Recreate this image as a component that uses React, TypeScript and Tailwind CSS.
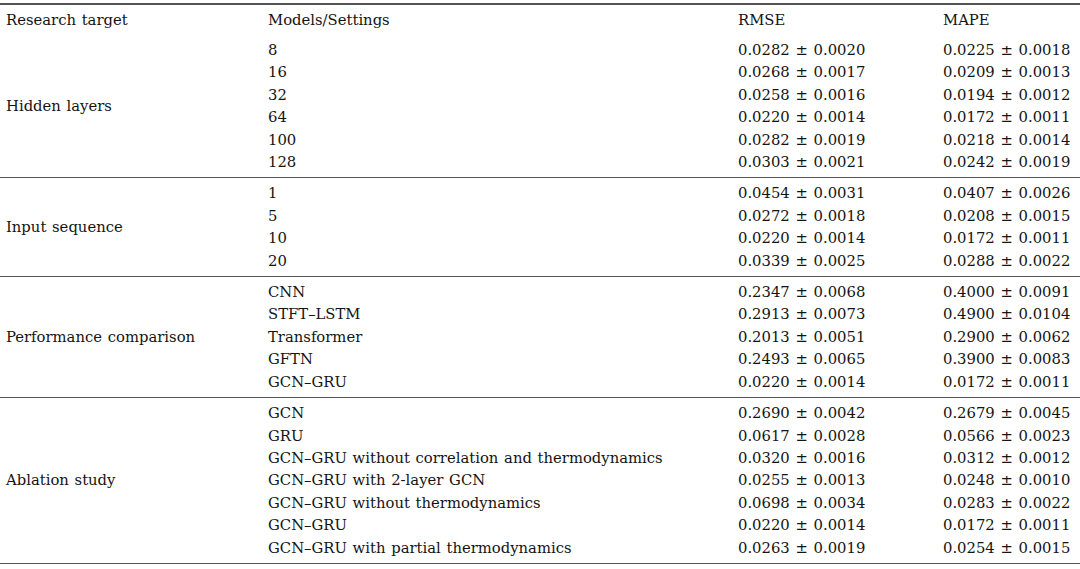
const sections: { target: string; rows: [string, string, string][] }[] = [
  {
    target: "Hidden layers",
    rows: [
      ["8", "0.0282 ± 0.0020", "0.0225 ± 0.0018"],
      ["16", "0.0268 ± 0.0017", "0.0209 ± 0.0013"],
      ["32", "0.0258 ± 0.0016", "0.0194 ± 0.0012"],
      ["64", "0.0220 ± 0.0014", "0.0172 ± 0.0011"],
      ["100", "0.0282 ± 0.0019", "0.0218 ± 0.0014"],
      ["128", "0.0303 ± 0.0021", "0.0242 ± 0.0019"],
    ],
  },
  {
    target: "Input sequence",
    rows: [
      ["1", "0.0454 ± 0.0031", "0.0407 ± 0.0026"],
      ["5", "0.0272 ± 0.0018", "0.0208 ± 0.0015"],
      ["10", "0.0220 ± 0.0014", "0.0172 ± 0.0011"],
      ["20", "0.0339 ± 0.0025", "0.0288 ± 0.0022"],
    ],
  },
  {
    target: "Performance comparison",
    rows: [
      ["CNN", "0.2347 ± 0.0068", "0.4000 ± 0.0091"],
      ["STFT–LSTM", "0.2913 ± 0.0073", "0.4900 ± 0.0104"],
      ["Transformer", "0.2013 ± 0.0051", "0.2900 ± 0.0062"],
      ["GFTN", "0.2493 ± 0.0065", "0.3900 ± 0.0083"],
      ["GCN–GRU", "0.0220 ± 0.0014", "0.0172 ± 0.0011"],
    ],
  },
  {
    target: "Ablation study",
    rows: [
      ["GCN", "0.2690 ± 0.0042", "0.2679 ± 0.0045"],
      ["GRU", "0.0617 ± 0.0028", "0.0566 ± 0.0023"],
      ["GCN–GRU without correlation and thermodynamics", "0.0320 ± 0.0016", "0.0312 ± 0.0012"],
      ["GCN–GRU with 2-layer GCN", "0.0255 ± 0.0013", "0.0248 ± 0.0010"],
      ["GCN–GRU without thermodynamics", "0.0698 ± 0.0034", "0.0283 ± 0.0022"],
      ["GCN–GRU", "0.0220 ± 0.0014", "0.0172 ± 0.0011"],
      ["GCN–GRU with partial thermodynamics", "0.0263 ± 0.0019", "0.0254 ± 0.0015"],
    ],
  },
];

export default function App() {
  return (
    <div className="h-[569px] w-[1080px] bg-white pt-[3px] font-['DejaVu_Serif',serif] text-[14.8px] text-[#141414] [word-spacing:1px]">
      <div className="border-t-[2px] border-b-[1.5px] border-[#555]">
        <div className="flex h-[30px] items-center">
          <div className="w-[268px] pl-[6px]">Research target</div>
          <div className="w-[470px]">Models/Settings</div>
          <div className="w-[205px]">RMSE</div>
          <div className="flex-1">MAPE</div>
        </div>
        {sections.map((s, i) => (
          <div
            key={s.target}
            className={`flex ${i > 0 ? "border-t-[1.5px] border-[#555]" : ""}`}
          >
            <div className="flex w-[268px] items-center pl-[6px]">{s.target}</div>
            <div className="flex-1 py-[4px]">
              {s.rows.map((r, j) => (
                <div key={j} className="flex leading-[22.4px]">
                  <div className="w-[470px]">{r[0]}</div>
                  <div className="w-[205px]">{r[1]}</div>
                  <div className="flex-1">{r[2]}</div>
                </div>
              ))}
            </div>
          </div>
        ))}
      </div>
    </div>
  );
}
